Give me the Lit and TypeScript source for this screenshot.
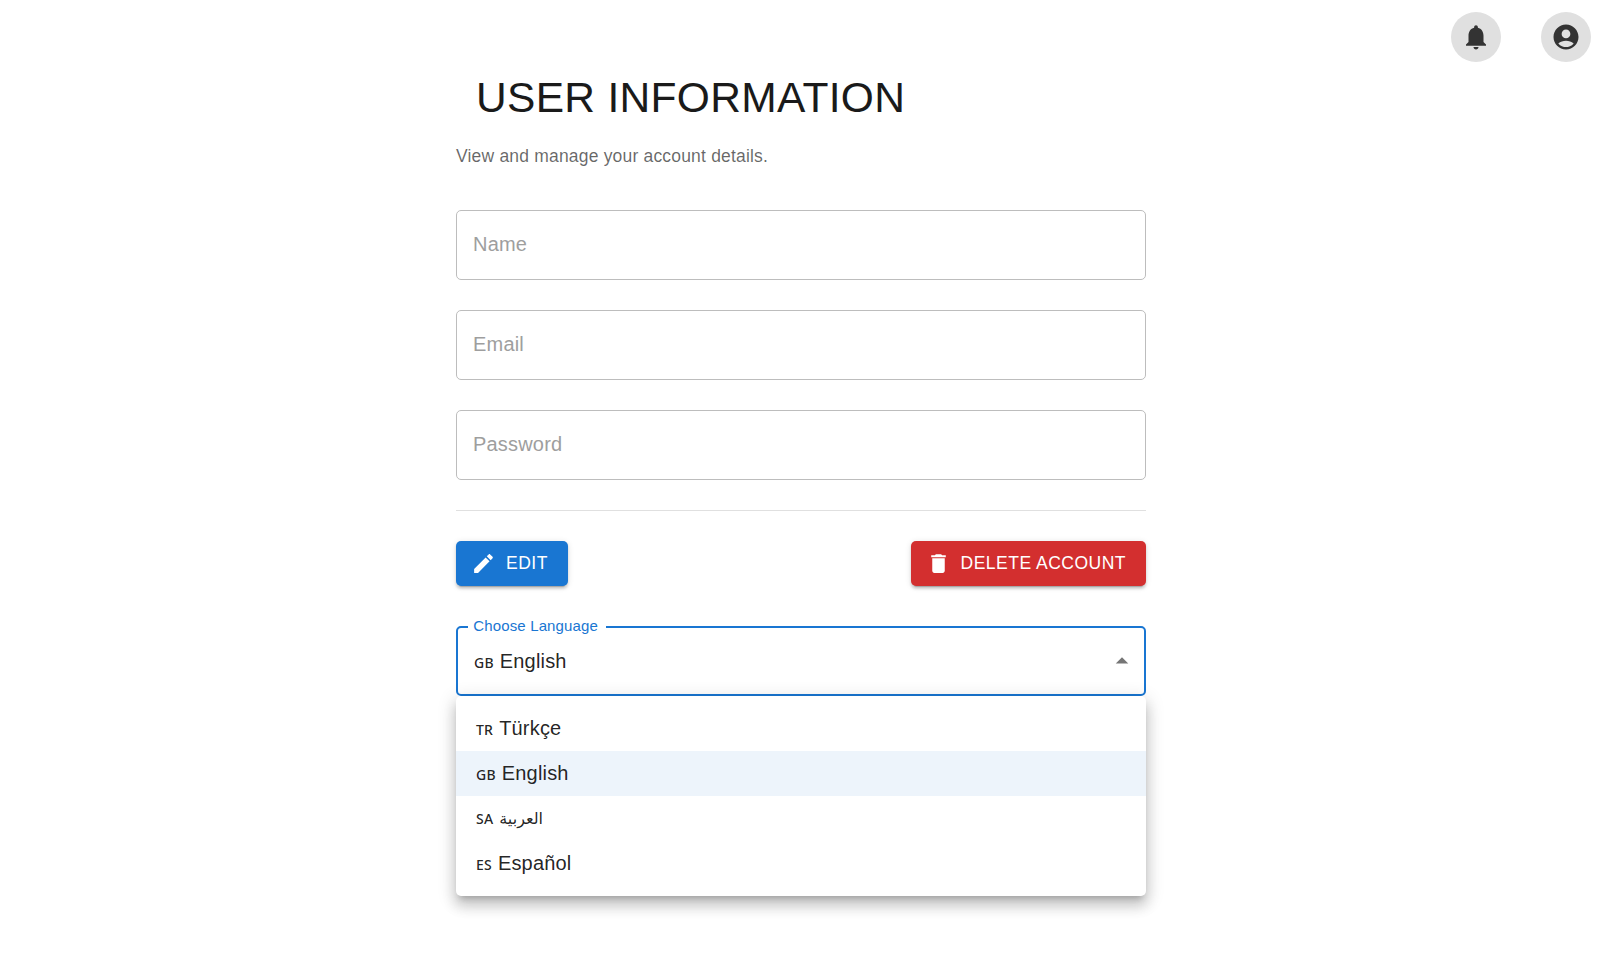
import { LitElement, html, css } from "lit";
import { customElement, property, state } from "lit/decorators.js";
import { classMap } from "lit/directives/class-map.js";

const languages = [
  { code: "TR", name: "Türkçe" },
  { code: "GB", name: "English" },
  { code: "SA", name: "العربية", arabic: true },
  { code: "ES", name: "Español" },
];

const icons: Record<string, string> = {
  bell: "M12 22c1.1 0 2-.9 2-2h-4c0 1.1.89 2 2 2zm6-6v-5c0-3.07-1.64-5.64-4.5-6.32V4c0-.83-.67-1.5-1.5-1.5s-1.5.67-1.5 1.5v.68C7.63 5.36 6 7.92 6 11v5l-2 2v1h16v-1l-2-2z",
  account: "M12 2C6.48 2 2 6.48 2 12s4.48 10 10 10 10-4.48 10-10S17.52 2 12 2zm0 4c1.93 0 3.5 1.57 3.5 3.5S13.93 13 12 13s-3.5-1.57-3.5-3.5S10.07 6 12 6zm0 14c-2.03 0-4.43-.82-6.14-2.88C7.55 15.8 9.68 15 12 15s4.45.8 6.14 2.12C16.43 19.18 14.03 20 12 20z",
  edit: "M3 17.25V21h3.75L17.81 9.94l-3.75-3.75L3 17.25zM20.71 7.04c.39-.39.39-1.02 0-1.41l-2.34-2.34c-.39-.39-1.02-.39-1.41 0l-1.83 1.83 3.75 3.75 1.83-1.83z",
  trash: "M6 19c0 1.1.9 2 2 2h8c1.1 0 2-.9 2-2V7H6v12zM19 4h-3.5l-1-1h-5l-1 1H5v2h14V4z",
  up: "M7 14l5-5 5 5z",
};

@customElement("ui-icon")
export class UiIcon extends LitElement {
  static styles = css`
    :host { display: block; flex: none; }
    svg { display: block; width: 100%; height: 100%; fill: currentColor; }
  `;
  @property() name = "bell";
  render() {
    return html`<svg viewBox="0 0 24 24" aria-hidden="true"><path d=${icons[this.name]}></path></svg>`;
  }
}

@customElement("app-root")
export class AppRoot extends LitElement {
  static styles = css`
    :host {
      display: block;
      position: relative;
      min-height: 973px;
      box-sizing: border-box;
      background: #fff;
      color: rgba(0, 0, 0, 0.87);
      font-family: "Liberation Sans", Arial, sans-serif;
    }
    * { box-sizing: border-box; }
    .topbar { display: flex; justify-content: flex-end; gap: 40px; padding: 12px 15px 0; height: 62px; }
    .round { width: 50px; height: 50px; padding: 0; border: 0; border-radius: 50%; background: #e0e0e0; color: #333; display: grid; place-items: center; }
    .round ui-icon { width: 30px; height: 30px; }
    main { width: 690px; margin: 0 0 0 456px; display: flex; flex-direction: column; }
    h1 { margin: 9px 0 0; padding-left: 20px; height: 53px; font-size: 42.5px; font-weight: 400; line-height: 53px; letter-spacing: 0.00735em; color: #1a1a1a; }
    .sub { margin: 20px 0 0; height: 25px; line-height: 25px; font-size: 17.5px; letter-spacing: 0.01071em; color: rgba(0, 0, 0, 0.6); }
    .fields { display: grid; gap: 30px; margin-top: 41px; }
    .field { height: 70px; width: 100%; border: 1px solid #bdbdbd; border-radius: 5px; padding: 0 16px 1px; font: 400 20px "Liberation Sans", Arial, sans-serif; letter-spacing: 0.00938em; background: transparent; outline: 0; }
    .field::placeholder { color: #9e9e9e; opacity: 1; }
    .divider { height: 1px; margin-top: 30px; background: #e0e0e0; }
    .actions { display: flex; justify-content: space-between; margin-top: 30px; }
    .btn { display: flex; align-items: center; gap: 10px; height: 45px; padding: 0 20px 0 15px; border: 0; border-radius: 5px; color: #fff; font: 400 17.5px/30px "Liberation Sans", Arial, sans-serif; letter-spacing: 0.02857em;
      box-shadow: 0 4px 1px -3px rgba(0, 0, 0, 0.2), 0 2.5px 2.5px 0 rgba(0, 0, 0, 0.14), 0 1px 6px 0 rgba(0, 0, 0, 0.12); }
    .btn ui-icon { width: 25px; height: 25px; }
    .btn span { padding-bottom: 1px; }
    .edit { background: #1976d2; }
    .delete { background: #d32f2f; }
    .select { position: relative; display: flex; align-items: center; justify-content: space-between; height: 70px; margin-top: 40px; padding: 0 7px 0 16px; border: 2px solid #1976d2; border-radius: 5px; }
    .value { padding-top: 2px; }
    .label { position: absolute; left: 10px; top: -12px; width: 138px; padding-left: 5.3px; background: #fff; color: #1976d2; font-size: 15px; line-height: 20px; letter-spacing: 0.00938em; white-space: nowrap; }
    .lang { display: flex; align-items: baseline; gap: 6px; font-size: 20px; line-height: 30px; letter-spacing: 0.00938em; white-space: pre; }
    .code { font-family: "Noto Sans", sans-serif; font-size: 14px; font-weight: 500; letter-spacing: 0.2px; }
    .arabic { font-family: "DejaVu Sans", sans-serif; font-size: 16px; letter-spacing: 0; }
    .arrow { width: 30px; height: 30px; color: rgba(0, 0, 0, 0.54); }
    .menu { position: absolute; left: -2px; top: 68px; width: 690px; padding: 10px 0; margin: 0; list-style: none; background: #fff; border-radius: 5px; z-index: 1;
      box-shadow: 0 6px 6px -4px rgba(0, 0, 0, 0.2), 0 10px 12.5px 1px rgba(0, 0, 0, 0.14), 0 4px 17.5px 2.5px rgba(0, 0, 0, 0.12); }
    .item { display: flex; align-items: center; height: 45px; padding: 0 20px; }
    .selected { background: rgba(25, 118, 210, 0.08); }
  `;

  @state() private current = "GB";

  private language(l: { code: string; name: string; arabic?: boolean }) {
    return html`<span class="lang"><span class="code">${l.code}</span><span class=${classMap({ arabic: !!l.arabic })}>${l.name}</span></span>`;
  }

  render() {
    const chosen = languages.find((l) => l.code === this.current)!;
    return html`
      <header class="topbar">
        <button class="round" aria-label="Notifications"><ui-icon name="bell"></ui-icon></button>
        <button class="round" aria-label="Account"><ui-icon name="account"></ui-icon></button>
      </header>
      <main>
        <h1>USER INFORMATION</h1>
        <p class="sub">View and manage your account details.</p>
        <div class="fields">
          ${["Name", "Email", "Password"].map((f) => html`<input class="field" placeholder=${f} />`)}
        </div>
        <div class="divider"></div>
        <div class="actions">
          <button class="btn edit"><ui-icon name="edit"></ui-icon><span>EDIT</span></button>
          <button class="btn delete"><ui-icon name="trash"></ui-icon><span>DELETE ACCOUNT</span></button>
        </div>
        <div class="select">
          <span class="label">Choose Language</span>
          <div class="value">${this.language(chosen)}</div>
          <ui-icon class="arrow" name="up"></ui-icon>
          <ul class="menu">
            ${languages.map(
              (l) => html`<li class=${classMap({ item: true, selected: l.code === this.current })}
                @click=${() => (this.current = l.code)}>${this.language(l)}</li>`,
            )}
          </ul>
        </div>
      </main>
    `;
  }
}
